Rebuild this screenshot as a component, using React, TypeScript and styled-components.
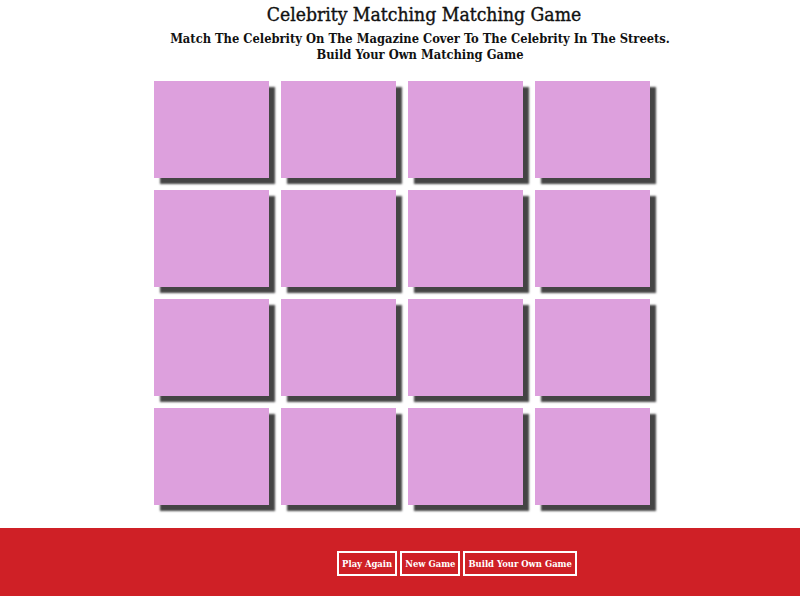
import React from "react";
import styled, { createGlobalStyle } from "styled-components";

const FONT = `"DejaVu Serif Condensed", "DejaVu Serif", "Liberation Serif", serif`;

const Global = createGlobalStyle`
  html, body { margin: 0; padding: 0; background: #ffffff; }
  body { font-family: ${FONT}; }
  #root { width: 800px; height: 596px; }
`;

const Page = styled.div`
  width: 800px;
  height: 596px;
  display: flex;
  flex-direction: column;
`;

const Header = styled.header`
  display: flex;
  flex-direction: column;
  align-items: center;
  padding: 3px 0 0 40px;
  color: #111;
`;

const Title = styled.h1`
  margin: 0 0 0 8px;
  font-size: 19.2px;
  line-height: 24px;
  font-weight: normal;
  -webkit-text-stroke: 0.35px #111;
`;

const Subtitle = styled.h3`
  margin: 4px 0 0;
  font-size: 12.8px;
  line-height: 16px;
  font-weight: bold;
  text-align: center;
`;

const Board = styled.main`
  flex: 1;
  display: grid;
  grid-template-columns: repeat(4, 115px);
  grid-auto-rows: 97px;
  gap: 12px;
  justify-content: center;
  align-content: start;
  padding: 18px 0 0 4px;
`;

const Card = styled.div`
  background: #dda0dd;
  box-shadow: 6px 6px 2px #444444;
`;

const Footer = styled.footer`
  height: 68px;
  background: #cf2026;
  display: flex;
  justify-content: center;
  align-items: center;
  gap: 3px;
  padding: 2px 0 0 114px;
  box-sizing: border-box;
`;

const Button = styled.button`
  background: transparent;
  border: 2px solid #ffffff;
  color: #ffffff;
  font-family: ${FONT};
  font-size: 9.4px;
  font-weight: bold;
  height: 25px;
  padding: 0 3px;
  cursor: pointer;
`;

export default function App() {
  const cards = Array.from({ length: 16 }, (_, i) => i);
  return (
    <>
      <Global />
      <Page>
        <Header>
          <Title>Celebrity Matching Matching Game</Title>
          <Subtitle>
            Match The Celebrity On The Magazine Cover To The Celebrity In The Streets.
            <br />
            Build Your Own Matching Game
          </Subtitle>
        </Header>
        <Board>
          {cards.map((i) => (
            <Card key={i} />
          ))}
        </Board>
        <Footer>
          <Button>Play Again</Button>
          <Button>New Game</Button>
          <Button>Build Your Own Game</Button>
        </Footer>
      </Page>
    </>
  );
}
